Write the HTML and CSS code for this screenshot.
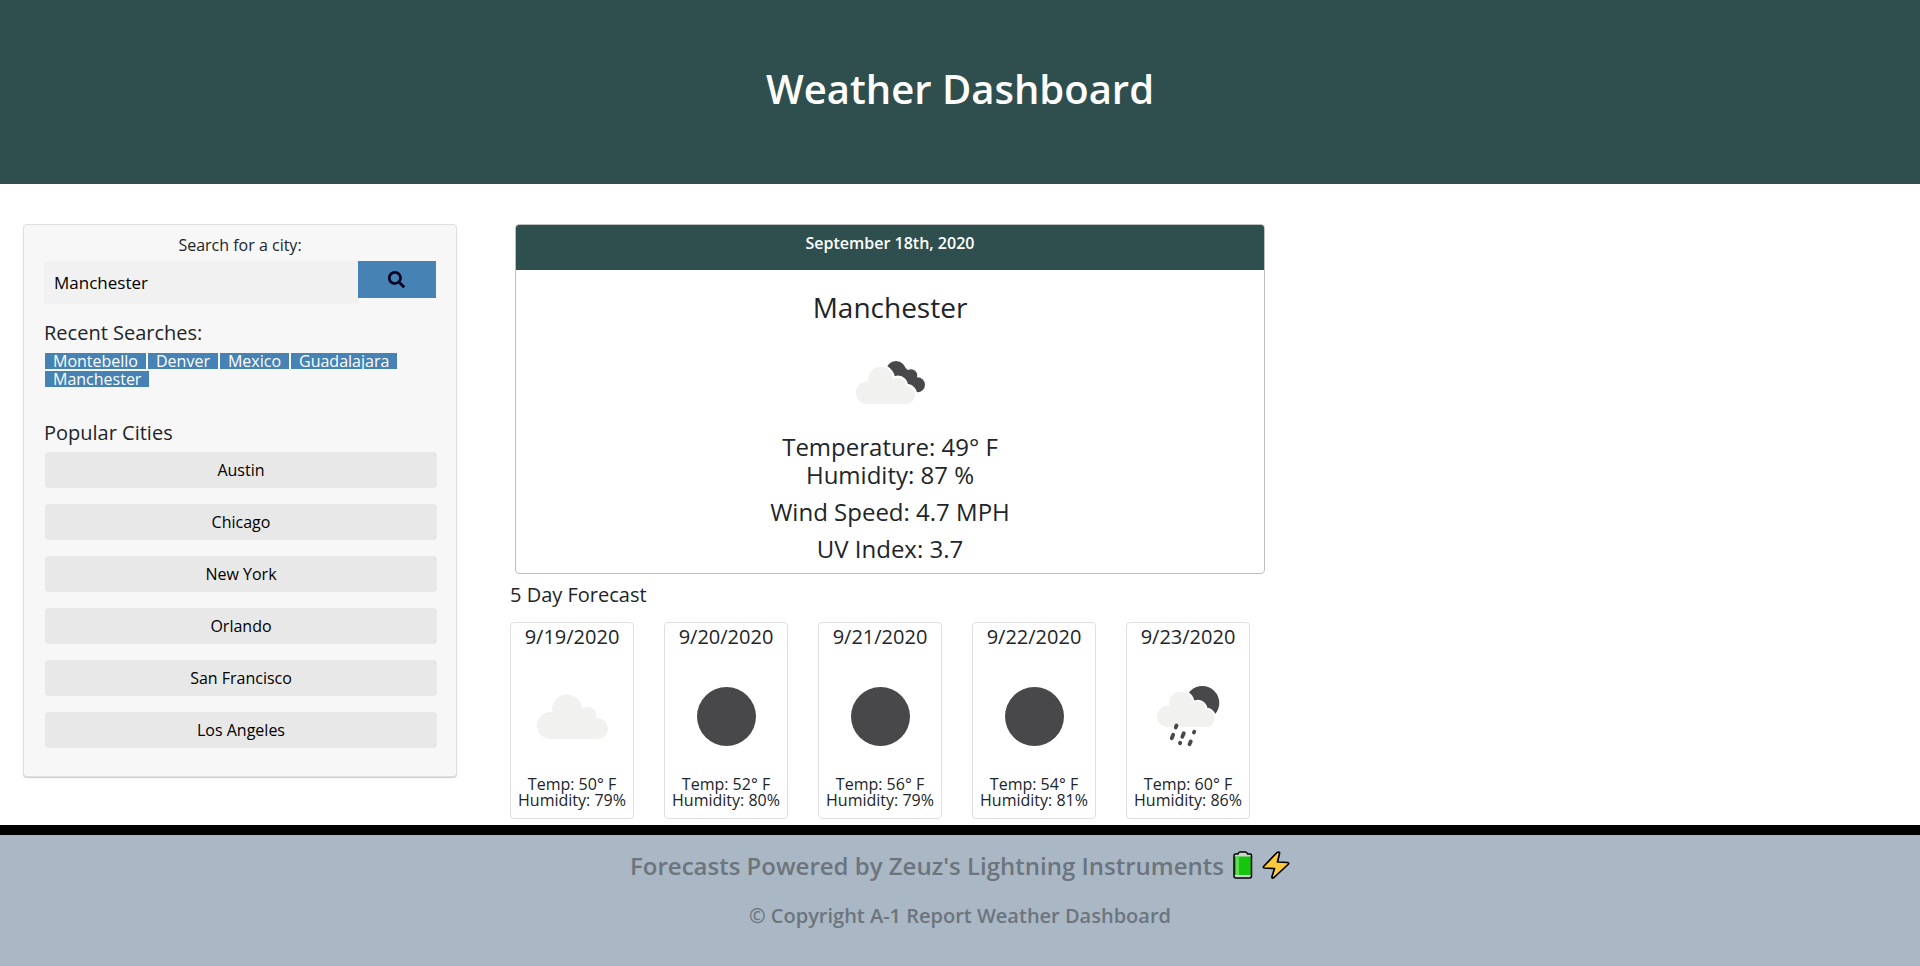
FILE: index.html
```html
<!DOCTYPE html>
<html lang="en">
<head>
<meta charset="utf-8">
<meta name="viewport" content="width=device-width, initial-scale=1">
<title>Weather Dashboard</title>
<link rel="stylesheet" href="styles.css">
</head>
<body>
<header class="masthead"><h1 class="masthead-title">Weather Dashboard</h1></header>

<div class="layout">
  <aside class="sidebar">
    <form class="search">
      <label class="search-label" for="city">Search for a city:</label>
      <div class="search-row">
        <input class="search-input" id="city" type="text" value="Manchester">
        <button class="search-button" type="button" aria-label="Search">
          <svg class="search-icon" viewBox="0 0 512 512" aria-hidden="true"><path fill="currentColor" d="M505 442.700 405.300 343c-4.500-4.500-10.600-7-17-7H372c27.600-35.300 44-79.700 44-128C416 93.100 322.900 0 208 0S0 93.100 0 208s93.100 208 208 208c48.300 0 92.700-16.400 128-44v16.300c0 6.400 2.500 12.500 7 17l99.700 99.700c9.400 9.400 24.600 9.400 33.900 0l28.300-28.300c9.400-9.400 9.400-24.600.1-34zM208 336c-70.700 0-128-57.200-128-128 0-70.700 57.200-128 128-128 70.700 0 128 57.200 128 128 0 70.700-57.200 128-128 128z"/></svg>
        </button>
      </div>
    </form>
    <section class="recent">
      <h2 class="section-title">Recent Searches:</h2>
      <ul class="tags">
        <li class="tag">Montebello</li>
        <li class="tag">Denver</li>
        <li class="tag">Mexico</li>
        <li class="tag">Guadalajara</li>
        <li class="tag">Manchester</li>
      </ul>
    </section>
    <section class="popular">
      <h2 class="section-title">Popular Cities</h2>
      <div class="city-list">
        <button class="city" type="button">Austin</button>
        <button class="city" type="button">Chicago</button>
        <button class="city" type="button">New York</button>
        <button class="city" type="button">Orlando</button>
        <button class="city" type="button">San Francisco</button>
        <button class="city" type="button">Los Angeles</button>
      </div>
    </section>
  </aside>

  <main class="main">
    <section class="today">
      <div class="today-date">September 18th, 2020</div>
      <div class="today-body">
        <h2 class="today-city">Manchester</h2>
        <svg class="weather-icon" viewBox="0 0 100 100" role="img" aria-label="Broken clouds">
          <g fill="#48484a">
            <circle cx="56" cy="37" r="10"/><circle cx="71" cy="41.500" r="6.300"/><circle cx="77.500" cy="50.700" r="7.500"/>
            <path d="M50 40 62 31 76 43 78 58H70z"/>
          </g>
          <g fill="#f1f1f0" stroke="#fff" stroke-width="2.500">
            <circle cx="40.700" cy="45" r="13"/><circle cx="58" cy="51.500" r="8.700"/><circle cx="66" cy="61" r="10"/>
          </g>
          <g fill="#f1f1f0">
            <circle cx="27" cy="58.800" r="11.200"/><circle cx="40.700" cy="45" r="12.300"/><circle cx="58" cy="51.500" r="7.700"/><circle cx="66" cy="61" r="9"/>
            <path d="M27 51 40 45 58 49 66 55V70H27z"/>
          </g>
        </svg>
        <p class="reading reading-tight">Temperature: 49° F</p>
        <p class="reading">Humidity: 87 %</p>
        <p class="reading">Wind Speed: 4.7 MPH</p>
        <p class="reading">UV Index: 3.7</p>
      </div>
    </section>

    <h2 class="forecast-title">5 Day Forecast</h2>
    <div class="forecast">
      <article class="day">
        <h3 class="day-date">9/19/2020</h3>
        <svg class="weather-icon" viewBox="0 0 100 100" role="img" aria-label="Scattered clouds">
          <g fill="#f1f1f0"><circle cx="28.500" cy="58.500" r="13.500"/><circle cx="45" cy="42.500" r="15"/><circle cx="65.500" cy="48.700" r="9"/><circle cx="75.500" cy="61.500" r="10.500"/><path d="M28 50 45 42 66 45 75 55V72H28z"/></g>
        </svg>
        <p class="day-reading">Temp: 50° F</p>
        <p class="day-reading">Humidity: 79%</p>
      </article>
      <article class="day">
        <h3 class="day-date">9/20/2020</h3>
        <svg class="weather-icon" viewBox="0 0 100 100" role="img" aria-label="Clear night"><circle cx="50.500" cy="49.500" r="29.500" fill="#48484a"/></svg>
        <p class="day-reading">Temp: 52° F</p>
        <p class="day-reading">Humidity: 80%</p>
      </article>
      <article class="day">
        <h3 class="day-date">9/21/2020</h3>
        <svg class="weather-icon" viewBox="0 0 100 100" role="img" aria-label="Clear night"><circle cx="50.500" cy="49.500" r="29.500" fill="#48484a"/></svg>
        <p class="day-reading">Temp: 56° F</p>
        <p class="day-reading">Humidity: 79%</p>
      </article>
      <article class="day">
        <h3 class="day-date">9/22/2020</h3>
        <svg class="weather-icon" viewBox="0 0 100 100" role="img" aria-label="Clear night"><circle cx="50.500" cy="49.500" r="29.500" fill="#48484a"/></svg>
        <p class="day-reading">Temp: 54° F</p>
        <p class="day-reading">Humidity: 81%</p>
      </article>
      <article class="day">
        <h3 class="day-date">9/23/2020</h3>
        <svg class="weather-icon" viewBox="0 0 100 100" role="img" aria-label="Rainy night">
          <circle cx="64.300" cy="36" r="17" fill="#48484a"/>
          <g fill="#f1f1f0" stroke="#fff" stroke-width="2">
            <circle cx="43" cy="36.700" r="12.800"/><circle cx="60" cy="42" r="8.300"/><circle cx="67.500" cy="51.300" r="9.800"/>
          </g>
          <g fill="#f1f1f0">
            <circle cx="29.700" cy="49.300" r="10.700"/><circle cx="43" cy="36.700" r="12"/><circle cx="60" cy="42" r="7.500"/><circle cx="67.500" cy="51.200" r="8.800"/>
            <path d="M29 42 43 36 60 39 67 46V60H29z"/>
          </g>
          <path d="M38.500 58.500 37.700 60.500M35.200 67.700 33.700 71.300M45.800 66.300 44.300 69.700M56.300 64.700 55.900 65.600M42.200 75.700 42 76.200M52.800 74.400 51.500 77.300" fill="none" stroke="#48484a" stroke-width="3.800" stroke-linecap="round"/>
        </svg>
        <p class="day-reading">Temp: 60° F</p>
        <p class="day-reading">Humidity: 86%</p>
      </article>
    </div>
  </main>
</div>

<footer class="footer">
  <p class="footer-power">
    <span>Forecasts Powered by Zeuz's Lightning Instruments</span>
    <svg class="battery" viewBox="0 0 20 28" aria-hidden="true">
      <path d="M1 4.500Q1 3 2.500 3H5Q5.500 1 7 1H12.500Q14 1 14.500 3H17Q18.500 3 18.500 4.500V25Q18.500 27 16.500 27H3Q1 27 1 25Z" fill="#d2d3d5"/>
      <path d="M1 5.500H18.500V24H1z" fill="#16c60c"/><path d="M3 5.500H6V24H3z" fill="#5fdc58"/>
      <path d="M1 4.500Q1 3 2.500 3H5Q5.500 1 7 1H12.500Q14 1 14.500 3H17Q18.500 3 18.500 4.500V25Q18.500 27 16.500 27H3Q1 27 1 25Z" fill="none" stroke="#000" stroke-width="1.500"/>
    </svg>
    <svg class="bolt" viewBox="0 0 28 28" aria-hidden="true"><path d="M15 1.500Q18 .5 17.500 2.500L15.500 11 25.500 11.500Q27.500 12 26 13.500L12 26.500Q9.500 28 10 25.500L12.500 17.500 2.500 17Q.5 16.500 2 15z" fill="#ffc83d" stroke="#000" stroke-width="1.700" stroke-linejoin="round"/></svg>
  </p>
  <p class="footer-copy">© Copyright A-1 Report Weather Dashboard</p>
</footer>
</body>
</html>
```

FILE: styles.css
```css
*, *::before, *::after { box-sizing: border-box; }

body {
  display: flex;
  flex-direction: column;
  min-height: 100vh;
  margin: 0;
  background: #fff;
  color: #212529;
  font: 400 16px/24px "Open Sans", "Noto Sans", sans-serif;
}

h1, h2, h3, p, ul { margin: 0; padding: 0; font-weight: 400; }

button, input { border: 0; font-family: inherit; }

.masthead {
  padding: 65px 16px 71px;
  background: #2f4f4f;
  color: #fff;
  text-align: center;
}
.masthead-title { font-size: 40px; line-height: 48px; font-weight: 600; }

.layout {
  display: grid;
  grid-template-columns: 24fr 41fr 31fr;
  align-items: start;
  padding: 40px 0 6px;
}

/* Sidebar */
.sidebar {
  margin: 0 23px;
  padding: 8px 20px 28px;
  border: 1px solid #dfdfdf;
  border-radius: 4px;
  background: #f7f7f7;
  box-shadow: 0 1px 1px rgba(0, 0, 0, 0.2);
}
.search-label { display: block; padding-bottom: 4px; text-align: center; }
.search-row { display: flex; align-items: flex-start; }
.search-input {
  flex: 0 0 80%;
  min-width: 0;
  height: 43px;
  padding: 0 10px;
  background: #f1f1f1;
  color: #000;
  font-size: 17px;
}
.search-button {
  flex: 1;
  height: 37px;
  padding: 0;
  background: #4682b4;
  color: #000020;
}
.search-icon { display: block; width: 17px; height: 17px; margin: 0 auto; }

.section-title { font-size: 20px; line-height: 24px; }
.recent { padding-top: 17px; }
.tags { display: flex; flex-wrap: wrap; gap: 2px; margin: 8px 0 0 1px; list-style: none; }
.tag { padding: 0 8px; background: #4682b4; color: #fff; line-height: 16px; }

.popular { padding-top: 34px; }
.city-list { display: grid; gap: 16px; margin: 7px -1px 0 1px; }
.city {
  height: 36px;
  border-radius: 4px;
  background: #e8e8e8;
  color: #000;
  font-size: 16px;
}

/* Current conditions */
.main { padding: 0 30px; }
.today {
  margin: 0 5px;
  border: 1px solid #bfbfbf;
  border-radius: 4px;
  text-align: center;
}
.today-date {
  padding: 6px 16px 15px;
  border-radius: 3px 3px 0 0;
  background: #2f4f4f;
  color: #fff;
  font-weight: 600;
}
.today-body { padding: 20px 20px 1px; }
.today-city { font-size: 28px; line-height: 34px; }
.weather-icon { display: block; width: 100px; height: 100px; margin: 0 auto; }
.today .weather-icon { margin: 10px auto -1px; }
.reading { padding-bottom: 9px; font-size: 24px; line-height: 28px; }
.reading-tight { padding-bottom: 0; }

/* Forecast */
.forecast-title { padding: 9px 0 15px; font-size: 20px; line-height: 24px; }
.forecast {
  display: grid;
  grid-template-columns: repeat(5, 1fr);
  gap: 30px;
  margin-right: 20px;
}
.day {
  padding: 2px 0 10px;
  border: 1px solid #dfdfdf;
  border-radius: 4px;
  text-align: center;
}
.day-date { font-size: 20px; line-height: 24px; }
.day .weather-icon { margin: 18px auto 9px; }
.day-reading { line-height: 16px; white-space: nowrap; }

/* Footer */
.footer {
  flex: 1;
  padding: 16px;
  border-top: 10px solid #000;
  background: #aab7c4;
  color: #6c757d;
  text-align: center;
}
.footer p { font-weight: 600; }
.footer-power {
  display: flex;
  justify-content: center;
  gap: 9px;
  font-size: 24px;
  line-height: 29px;
}
.battery { width: 20px; height: 28px; }
.bolt { width: 28px; height: 28px; }
.footer .footer-copy { padding-top: 24px; font-size: 20px; line-height: 24px; }
```
